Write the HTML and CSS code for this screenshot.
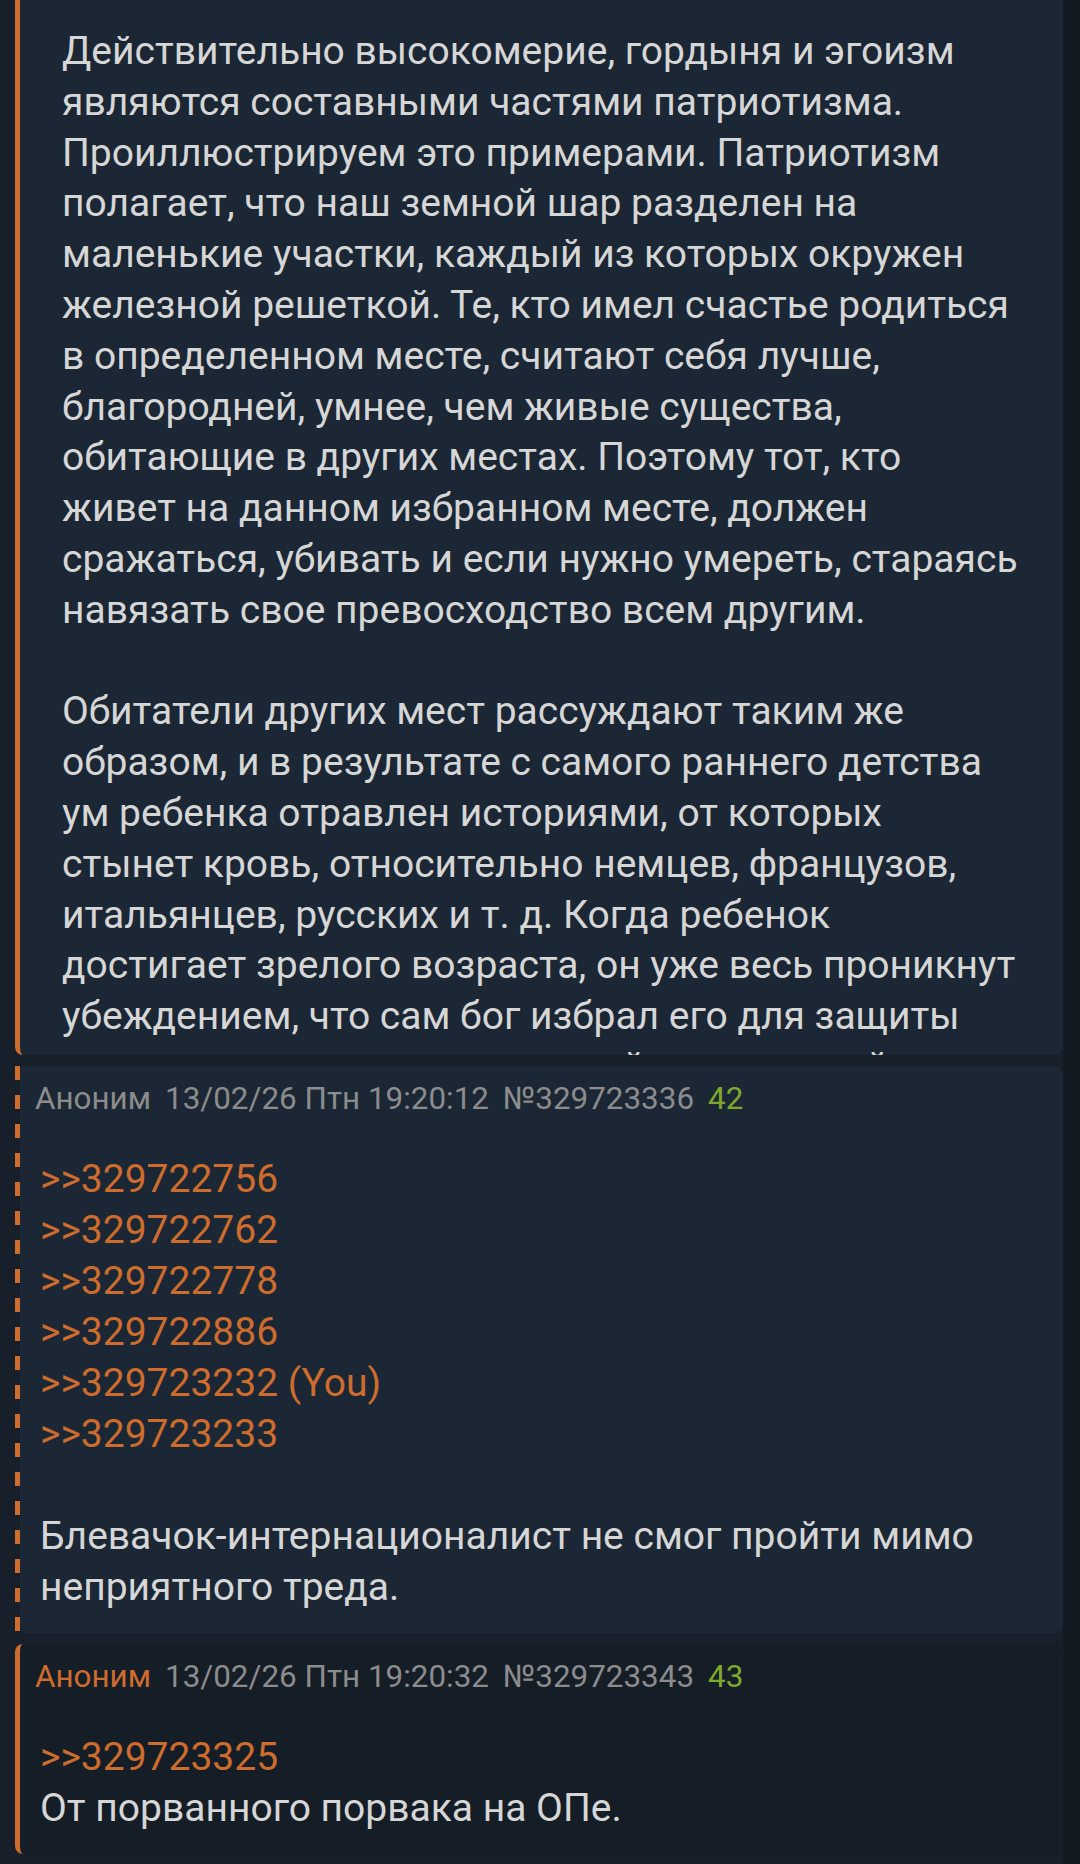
FILE: index.html
```html
<!DOCTYPE html>
<html lang="ru">

<head>
  <meta charset="UTF-8" />
  <meta name="viewport" content="width=device-width, initial-scale=1.0" />
  <title>Тред</title>
  <link rel="stylesheet" href="styles.css">
</head>

<body>
  <div class="thread">
    <div class="post post-op">
      <div class="post-text">
        Действительно высокомерие, гордыня и эгоизм<br>
        являются составными частями патриотизма.<br>
        Проиллюстрируем это примерами. Патриотизм<br>
        полагает, что наш земной шар разделен на<br>
        маленькие участки, каждый из которых окружен<br>
        железной решеткой. Те, кто имел счастье родиться<br>
        в определенном месте, считают себя лучше,<br>
        благородней, умнее, чем живые существа,<br>
        обитающие в других местах. Поэтому тот, кто<br>
        живет на данном избранном месте, должен<br>
        сражаться, убивать и если нужно умереть, стараясь<br>
        навязать свое превосходство всем другим.<br>
        <br>
        Обитатели других мест рассуждают таким же<br>
        образом, и в результате с самого раннего детства<br>
        ум ребенка отравлен историями, от которых<br>
        стынет кровь, относительно немцев, французов,<br>
        итальянцев, русских и т. д. Когда ребенок<br>
        достигает зрелого возраста, он уже весь проникнут<br>
        убеждением, что сам бог избрал его для защиты<br>
        его родины ото всех нападений и вторжений<br>
        иностранных армий.
      </div>
    </div>

    <div class="post post-reply">
      <div class="post-head">
        <span class="name">Аноним</span>
        <span class="date">13/02/26 Птн 19:20:12</span>
        <span class="num">№329723336</span>
        <span class="count">42</span>
      </div>
      <div class="post-text">
        <a class="reply-link">&gt;&gt;329722756</a><br>
        <a class="reply-link">&gt;&gt;329722762</a><br>
        <a class="reply-link">&gt;&gt;329722778</a><br>
        <a class="reply-link">&gt;&gt;329722886</a><br>
        <a class="reply-link">&gt;&gt;329723232 (You)</a><br>
        <a class="reply-link">&gt;&gt;329723233</a><br>
        <br>
        Блевачок-интернационалист не смог пройти мимо неприятного треда.
      </div>
    </div>

    <div class="post post-mine">
      <div class="post-head">
        <span class="name name-op">Аноним</span>
        <span class="date">13/02/26 Птн 19:20:32</span>
        <span class="num">№329723343</span>
        <span class="count">43</span>
      </div>
      <div class="post-text">
        <a class="reply-link">&gt;&gt;329723325</a><br>
        От порванного порвака на ОПе.
      </div>
    </div>
  </div>
</body>

</html>
```

FILE: styles.css
```css
* {
  box-sizing: border-box;
}

body {
  margin: 0;
  background: #131a22;
  font-family: Roboto, "Noto Sans", sans-serif;
  color: #d6d6d6;
  overflow: hidden;
}

/* List of posts */
.thread {
  width: 1063px;
  min-height: 1864px;
  padding-left: 15px;
  background: #17202a;
  display: flex;
  flex-direction: column;
  gap: 11px;
}

.post {
  background: #1b2734;
  border-left: 5px solid #cd6c2d;
  border-radius: 8px;
  overflow: hidden;
}

/* Opening post, collapsed */
.post-op {
  margin-top: -20px;
  height: 1075px;
  padding: 46px 20px 0 42px;
}

.post-op .post-text {
  padding: 0;
  line-height: 50.8px;
}

/* Reply to me: dashed marker */
.post-reply {
  background-clip: padding-box;
  border-image: repeating-linear-gradient(to bottom, #cd6c2d 0 14px, transparent 14px 29px) 0 0 0 5 / 0 0 0 5px;
  padding: 13.4px 0 20px;
}

.post-mine {
  background: #151d27;
  padding: 13.4px 0 20px;
}

/* Header line: name, date, number, position */
.post-head {
  display: flex;
  gap: 14px;
  padding: 0 15px;
  font-size: 31.4px;
  line-height: 40px;
  color: #8c8c8c;
  margin-bottom: 34.5px;
}

.name-op {
  color: #cd6c2d;
}

.count {
  color: #7fa82c;
}

.post-text {
  padding: 0 20px;
  font-size: 39px;
  line-height: 51px;
}

.reply-link {
  color: #cd6c2d;
  text-decoration: none;
}
```
